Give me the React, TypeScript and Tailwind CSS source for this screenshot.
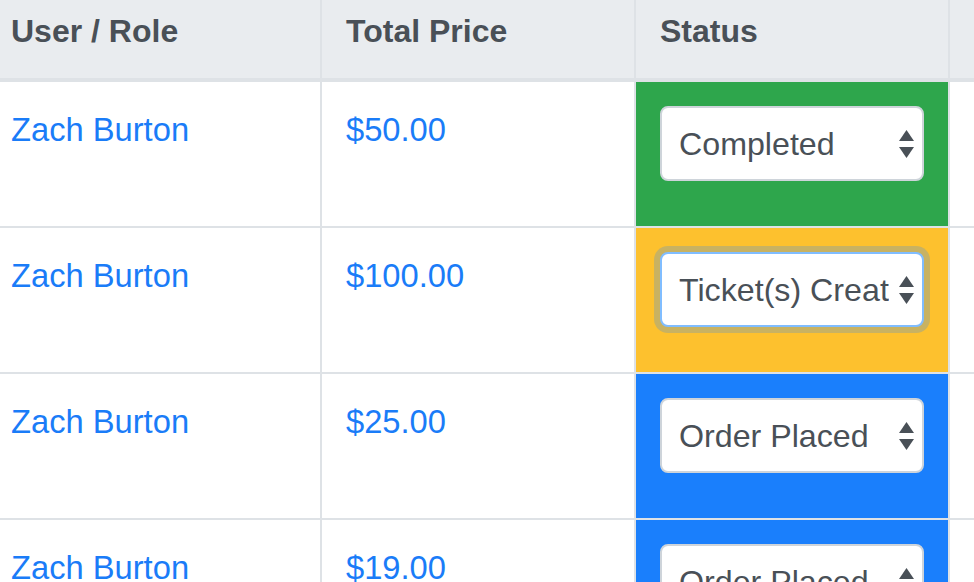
const rows = [
  { name: "Zach Burton", price: "$50.00", status: "Completed", bg: "bg-[#2ea64c]", focused: false },
  { name: "Zach Burton", price: "$100.00", status: "Ticket(s) Created", bg: "bg-[#fdc12e]", focused: true },
  { name: "Zach Burton", price: "$25.00", status: "Order Placed", bg: "bg-[#1a7ffc]", focused: false },
  { name: "Zach Burton", price: "$19.00", status: "Order Placed", bg: "bg-[#1a7ffc]", focused: false },
]

const Arrows = () => (
  <svg width="15" height="28" viewBox="0 0 15 28" className="shrink-0 mr-[8px]">
    <polygon points="7.5,0 15,11 0,11" fill="#495057" />
    <polygon points="0,17 15,17 7.5,28" fill="#495057" />
  </svg>
)

const StatusSelect = ({ value, focused }: { value: string; focused: boolean }) => (
  <div
    className={`flex items-center gap-[10px] h-[75px] w-full bg-white rounded-[8px] border-2 pl-[17px] ${
      focused ? "border-[#80bdff] shadow-[0_0_0_6px_#c8b262]" : "border-[#ced4da]"
    }`}
  >
    <span className="flex-1 min-w-0 overflow-hidden whitespace-nowrap text-[32.2px] leading-[48px] text-[#495057]">
      {value}
    </span>
    <Arrows />
  </div>
)

const App = () => {
  const head = "h-[82px] bg-[#e9ecef] border-b-4 border-[#dee2e6] pt-[7px] text-[32px] leading-[48px] font-bold text-[#495057]"
  const cell = "h-[146px] border-b-2 border-[#dee2e6] pt-6 text-[32.7px] leading-[48px] text-[#1a7cf8]"

  return (
    <div className="w-[974px] h-[582px] overflow-hidden bg-white" style={{ fontFamily: '"Liberation Sans", Arial, sans-serif' }}>
      <div className="grid grid-cols-[322px_314px_314px_1fr]">
        <div className={`${head} border-r-2 pl-[11px]`}>User / Role</div>
        <div className={`${head} border-r-2 pl-6`}>Total Price</div>
        <div className={`${head} border-r-2 pl-6`}>Status</div>
        <div className={head}></div>

        {rows.map((r, i) => (
          <div key={i} className="contents">
            <div className={`${cell} border-r-2 pl-[11px]`}>{r.name}</div>
            <div className={`${cell} border-r-2 pl-6`}>{r.price}</div>
            <div className={`${cell} border-r-2 ${r.bg} px-6`}>
              <StatusSelect value={r.status} focused={r.focused} />
            </div>
            <div className={cell}></div>
          </div>
        ))}
      </div>
    </div>
  )
}

export default App
